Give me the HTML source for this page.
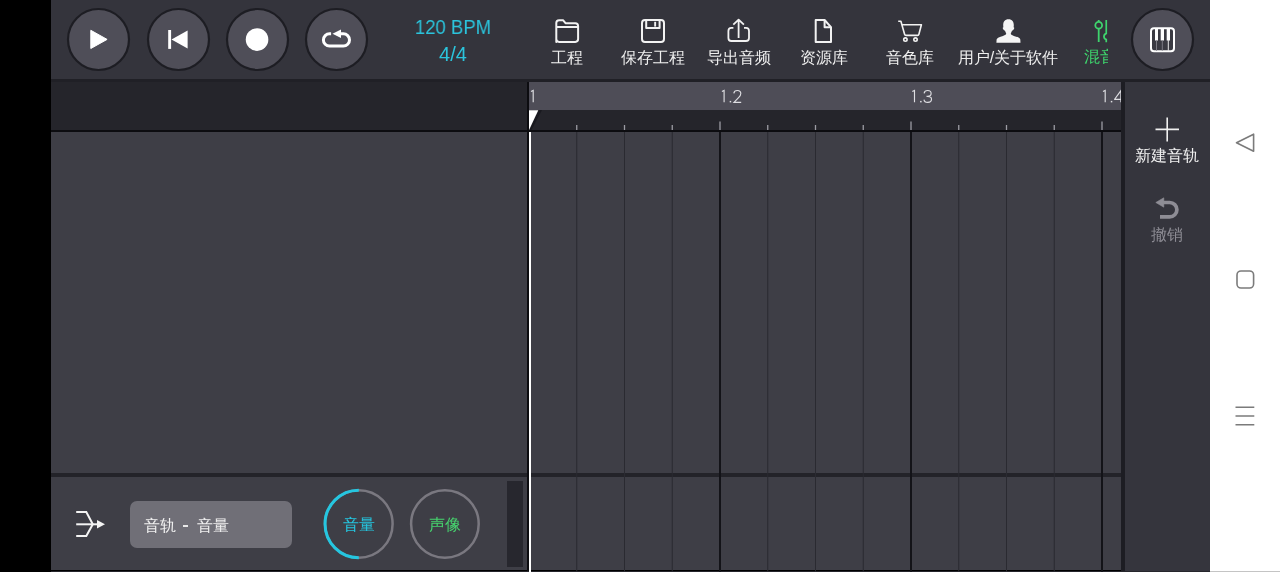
<!DOCTYPE html>
<html><head><meta charset="utf-8">
<style>
*{margin:0;padding:0;box-sizing:border-box}
html,body{width:1280px;height:572px;overflow:hidden;background:#000;font-family:"Liberation Sans",sans-serif;position:relative}
.a{position:absolute}
.t{position:absolute;white-space:nowrap;line-height:1;will-change:transform}
#ov{position:absolute;left:0;top:0}
</style></head><body>
<!-- backgrounds -->
<div class="a" style="left:51px;top:0;width:1159px;height:79px;background:#34343c"></div>
<div class="a" style="left:51px;top:79px;width:1159px;height:3px;background:#202026"></div>
<div class="a" style="left:51px;top:82px;width:476px;height:48px;background:#25252b"></div>
<div class="a" style="left:529px;top:82px;width:592px;height:28px;background:#4e4d57"></div>
<div class="a" style="left:529px;top:110px;width:592px;height:20px;background:#25252b"></div>
<div class="a" style="left:51px;top:130px;width:1070px;height:2px;background:#0c0c10"></div>
<div class="a" style="left:51px;top:132px;width:1070px;height:438px;background:#3e3e46"></div>
<div class="a" style="left:51px;top:472.8px;width:1070px;height:3.8px;background:#232329"></div>
<div class="a" style="left:527px;top:82px;width:2px;height:490px;background:#0c0c10"></div>
<div class="a" style="left:1121px;top:82px;width:4px;height:490px;background:#1d1d23"></div>
<div class="a" style="left:1125px;top:82px;width:85px;height:490px;background:#35353d"></div>
<div class="a" style="left:1210px;top:0;width:70px;height:572px;background:#fff"></div>
<div class="a" style="left:51px;top:570.5px;width:1159px;height:1.5px;background:#26262c"></div>
<div class="a" style="left:1210px;top:571px;width:70px;height:1px;background:#c4c4c4"></div>
<div class="a" style="left:130px;top:500.5px;width:162px;height:47.5px;border-radius:7px;background:#706f77"></div>
<div class="a" style="left:506.5px;top:481px;width:16px;height:86px;background:#27272e"></div>

<svg id="ov" width="1280" height="572" viewBox="0 0 1280 572">
 <!-- grid lines -->
 <g>
  <rect x="576.25" y="132" width="1" height="440" fill="#2a2a31"/>
  <rect x="576.10" y="125" width="1.3" height="5" fill="#9c9ca4"/>
  <rect x="624.00" y="132" width="1" height="440" fill="#2a2a31"/>
  <rect x="623.85" y="125" width="1.3" height="5" fill="#9c9ca4"/>
  <rect x="671.75" y="132" width="1" height="440" fill="#2a2a31"/>
  <rect x="671.60" y="125" width="1.3" height="5" fill="#9c9ca4"/>
  <rect x="719.00" y="132" width="2" height="440" fill="#131318"/>
  <rect x="719.35" y="121.5" width="1.3" height="8.5" fill="#9c9ca4"/>
  <rect x="767.25" y="132" width="1" height="440" fill="#2a2a31"/>
  <rect x="767.10" y="125" width="1.3" height="5" fill="#9c9ca4"/>
  <rect x="815.00" y="132" width="1" height="440" fill="#2a2a31"/>
  <rect x="814.85" y="125" width="1.3" height="5" fill="#9c9ca4"/>
  <rect x="862.75" y="132" width="1" height="440" fill="#2a2a31"/>
  <rect x="862.60" y="125" width="1.3" height="5" fill="#9c9ca4"/>
  <rect x="910.00" y="132" width="2" height="440" fill="#131318"/>
  <rect x="910.35" y="121.5" width="1.3" height="8.5" fill="#9c9ca4"/>
  <rect x="958.25" y="132" width="1" height="440" fill="#2a2a31"/>
  <rect x="958.10" y="125" width="1.3" height="5" fill="#9c9ca4"/>
  <rect x="1006.00" y="132" width="1" height="440" fill="#2a2a31"/>
  <rect x="1005.85" y="125" width="1.3" height="5" fill="#9c9ca4"/>
  <rect x="1053.75" y="132" width="1" height="440" fill="#2a2a31"/>
  <rect x="1053.60" y="125" width="1.3" height="5" fill="#9c9ca4"/>
  <rect x="1101.00" y="132" width="2" height="440" fill="#131318"/>
  <rect x="1101.35" y="121.5" width="1.3" height="8.5" fill="#9c9ca4"/>
 </g>
 <!-- transport buttons -->
 <g fill="#4f4e58" stroke="#1d1d23" stroke-width="2.2">
  <circle cx="98.5" cy="39.5" r="30.5"/>
  <circle cx="178.5" cy="39.5" r="30.5"/>
  <circle cx="257.5" cy="39.5" r="30.5"/>
  <circle cx="336.5" cy="39.5" r="30.5"/>
  <circle cx="1162.5" cy="39.5" r="30.5"/>
 </g>
 <path d="M90.8 30.3 L107.1 39.4 L90.8 48.5 Z" fill="#fff" stroke="#fff" stroke-width="1" stroke-linejoin="round"/>
 <rect x="168.2" y="30" width="2.9" height="18.9" fill="#fff"/><path d="M171.5 39.5 L187.6 30.6 L187.6 48.6 Z" fill="#fff"/>
 <circle cx="257.05" cy="39.6" r="11.3" fill="#fff"/>
 <path d="M331.1 33.8 H329.55 a6.15 6.15 0 0 0 0 12.3 H343.35 a6.15 6.15 0 0 0 0 -12.3 H340.5" fill="none" stroke="#fff" stroke-width="3"/><path d="M332.5 33.8 L341 29.6 L341 38 Z" fill="#fff"/>
 <!-- toolbar icons -->
 <g fill="none" stroke="#f2f2f2" stroke-width="2" stroke-linejoin="round">
  <path d="M556.3 41.9 V23 a2.8 2.8 0 0 1 2.8 -2.8 H563 L565.5 23.2 H575.3 a2.8 2.8 0 0 1 2.8 2.8 V39.1 a2.8 2.8 0 0 1 -2.8 2.8 H559.1 a2.8 2.8 0 0 1 -2.8 -2.8 Z"/>
  <path d="M556.3 27 H578.1"/>
  <rect x="642" y="20" width="22" height="22" rx="3"/>
  <path d="M646.2 20 V28 H659.6 V20"/>
  <rect x="654.2" y="21.8" width="1.9" height="4.8" fill="#f2f2f2" stroke="none"/>
  <path d="M733.4 27.9 H731.4 a3 3 0 0 0 -3 3 V38 a3 3 0 0 0 3 3 H746 a3 3 0 0 0 3 -3 V30.9 a3 3 0 0 0 -3 -3 H744" stroke-width="1.8"/>
  <path d="M738.6 38 V19.8 M733.3 24.6 L738.6 19.6 L743.9 24.6" stroke-width="1.8"/>
  <path d="M815.7 20 H824.6 L831 27.2 V42 H815.7 Z"/>
  <path d="M824.6 20 V27.2 H831"/>
  <path d="M898.2 21.2 H900.9 L904.6 34.3 a1.5 1.5 0 0 0 1.4 1.1 H917.5 a1.5 1.5 0 0 0 1.4 -1.1 L921.4 24.7 H902.1" stroke-width="1.6"/>
  <circle cx="905.4" cy="39.6" r="1.7" stroke-width="1.6"/>
  <circle cx="915.5" cy="39.6" r="1.7" stroke-width="1.6"/>
 </g>
 <path fill="#f4f4f4" d="M1008.5 19.2 C1004.8 19.2 1003.2 21.8 1003.2 25 C1003.2 26 1003.3 26.8 1003.4 27.3 C1002.6 27.4 1002.5 28.3 1003.2 29.2 C1003.8 30 1004.3 30.5 1005 30.8 C1005.6 32.2 1006 33 1006.2 33.6 C1006.2 34.6 1005.3 35.2 1003 35.9 C999.5 36.9 997 37.6 996.6 39.6 L996.4 42.8 H1020.5 L1020.3 39.6 C1019.9 37.6 1017.4 36.9 1013.9 35.9 C1011.6 35.2 1010.8 34.6 1010.8 33.6 C1011 33 1011.4 32.2 1012 30.8 C1012.7 30.5 1013.2 30 1013.8 29.2 C1014.5 28.3 1014.4 27.4 1013.6 27.3 C1013.7 26.8 1013.8 26 1013.8 25 C1013.8 21.8 1012.2 19.2 1008.5 19.2 Z"/>
 <svg x="1070" y="0" width="37.5" height="80" viewBox="1070 0 37.5 80">
  <g fill="none" stroke="#3ed46d" stroke-width="1.8">
   <path d="M1098.7 19.9 V21.8 M1098.7 28.6 V41.9"/>
   <circle cx="1098.7" cy="25.2" r="3.4"/>
   <path d="M1106.3 19.9 V33.3 C1103.2 34.5 1103.2 38.4 1106.3 39.6 V42.3"/>
  </g>
 </svg>
 <!-- piano icon -->
 <rect x="1151" y="28.2" width="23" height="23" rx="3" fill="#3a3a42" stroke="#fff" stroke-width="2"/>
 <g fill="#fff"><rect x="1155" y="28.5" width="3" height="12"/><rect x="1160.7" y="28.5" width="3.3" height="12"/><rect x="1166.7" y="28.5" width="3.3" height="12"/></g>
 <g stroke="#8d8c94" stroke-width="0.8"><path d="M1156.5 40 V51 M1162.3 40 V51"/></g>
 <path d="M1168.3 40 V51" stroke="#e8e8e8" stroke-width="1"/>
 <!-- right panel -->
 <path d="M1167.2 117.5 V141.4 M1155.5 129.4 H1179" stroke="#f0f0f0" stroke-width="1.6"/>
 <path d="M1162 202.5 H1169.7 A7.2 7.2 0 0 1 1169.7 216.9 H1160" fill="none" stroke="#8e8d95" stroke-width="3.7"/>
 <path d="M1155.8 202.5 L1163.8 197.8 L1163.8 207.2 Z" fill="#8e8d95" stroke="#8e8d95" stroke-width="0.6" stroke-linejoin="round"/>
 <!-- merge icon -->
 <g fill="none" stroke="#f4f4f4" stroke-width="2">
  <path d="M76.2 512.1 H86.3 L92.8 524.3 L86.3 536.1 H76.2"/>
  <path d="M76.2 524.3 H98"/>
 </g>
 <path d="M97 519.9 L105 524.2 L97 528.4 Z" fill="#f4f4f4"/>
 <!-- knobs -->
 <circle cx="358.8" cy="524" r="33.8" fill="none" stroke="#7a7880" stroke-width="2.5"/>
 <path d="M358.8 490.2 A33.8 33.8 0 0 0 358.8 557.8" fill="none" stroke="#25c6e0" stroke-width="3"/>
 <circle cx="444.9" cy="524" r="33.8" fill="none" stroke="#7a7880" stroke-width="2.5"/>
 <svg x="0" y="80" width="1121" height="32" viewBox="0 80 1121 32">
<g fill="none" stroke="#dedee2" stroke-width="1.15" stroke-linecap="butt">
<path transform="translate(531 90.5)" d="M0 1.1 L2.2 0 V11.8"/>
<path transform="translate(721.9 90.5)" d="M0 1.1 L2.2 0 V11.8 M11.9 2.9 C12.1 1.1 13.5 0 15.5 0 C17.5 0 18.9 1.2 18.9 3.1 C18.9 4.6 18.1 5.7 16.9 6.9 L12.1 11.8 H19.3"/>
<path transform="translate(912.3 90.5)" d="M0 1.1 L2.2 0 V11.8 M11.8 2.8 C12.1 1 13.5 0 15.4 0 C17.4 0 18.8 1.1 18.8 3 C18.8 4.8 17.4 5.8 15.4 5.8 H14.2 M15.4 5.8 C17.8 5.8 19.2 7 19.2 8.8 C19.2 10.8 17.6 11.9 15.4 11.9 C13.4 11.9 11.9 10.9 11.7 9.1"/>
<path transform="translate(1103 90.5)" d="M0 1.1 L2.2 0 V11.8 M17.9 11.8 V0.2 L11.7 8.6 V8.9 H19.8"/>
</g>
<g fill="#dedee2"><rect x="729.7" y="100.9" width="1.5" height="1.5"/><rect x="920.1" y="100.9" width="1.5" height="1.5"/><rect x="1110.8" y="100.9" width="1.5" height="1.5"/></g>
 </svg>
 <!-- playhead -->
 <path d="M537.5 110 H542 L531.5 130 H529.5 Z" fill="#18181d" opacity="0.85"/>
 <path d="M529 110.3 H538.3 L529 130 Z" fill="#fff"/>
 <rect x="529" y="132" width="2" height="440" fill="#fff"/>
 <!-- nav -->
 <g fill="none" stroke="#7b7b7b" stroke-width="1.6" stroke-linejoin="round">
  <path d="M1253.6 134.2 V151.2 L1236.5 142.7 Z"/>
  <rect x="1237" y="271" width="16.6" height="17" rx="4"/>
  <path d="M1235.5 407.3 H1254.3 M1235.5 416 H1254.3 M1235.5 424.8 H1254.3"/>
 </g>
</svg>

<!-- texts -->
<div class="t" style="left:400px;top:17px;width:106px;text-align:center;color:#2bc4dc;font-size:20px;transform:scaleX(0.925)">120 BPM</div>
<div class="t" style="left:400px;top:44px;width:106px;text-align:center;color:#2bc4dc;font-size:20px">4/4</div>
<div class="t" id="l1" style="left:527px;top:49.5px;width:80px;text-align:center;color:#eeeeee;font-size:16px">工程</div>
<div class="t" id="l2" style="left:612.8px;top:49.5px;width:80px;text-align:center;color:#eeeeee;font-size:16px">保存工程</div>
<div class="t" id="l3" style="left:698.5px;top:49.5px;width:80px;text-align:center;color:#eeeeee;font-size:16px">导出音频</div>
<div class="t" id="l4" style="left:784px;top:49.5px;width:80px;text-align:center;color:#eeeeee;font-size:16px">资源库</div>
<div class="t" id="l5" style="left:870px;top:49.5px;width:80px;text-align:center;color:#eeeeee;font-size:16px">音色库</div>
<div class="t" id="l6" style="left:948px;top:49.5px;width:120px;text-align:center;color:#eeeeee;font-size:16px">用户/关于软件</div>
<div class="a" style="left:1070px;top:0;width:37.5px;height:79px;overflow:hidden"><div class="t" id="l7" style="left:13.5px;top:48.5px;color:#3ed46d;font-size:16px">混音</div></div>
<div class="t" style="left:1127px;top:148px;width:80px;text-align:center;color:#f0f0f0;font-size:16px">新建音轨</div>
<div class="t" style="left:1127px;top:227px;width:80px;text-align:center;color:#8c8b93;font-size:16px">撤销</div>
<div class="t" style="left:143.5px;top:517.5px;color:#f0f0f0;font-size:15.5px">音轨</div><div class="a" style="left:183px;top:525px;width:4.5px;height:1.6px;background:#e8e8e8"></div><div class="t" style="left:196.5px;top:517.5px;color:#f0f0f0;font-size:15.5px">音量</div>
<div class="t" style="left:328.8px;top:517px;width:60px;text-align:center;color:#25c6e0;font-size:15.5px">音量</div>
<div class="t" style="left:414.9px;top:517px;width:60px;text-align:center;color:#46d46e;font-size:15.5px">声像</div>
</body></html>
